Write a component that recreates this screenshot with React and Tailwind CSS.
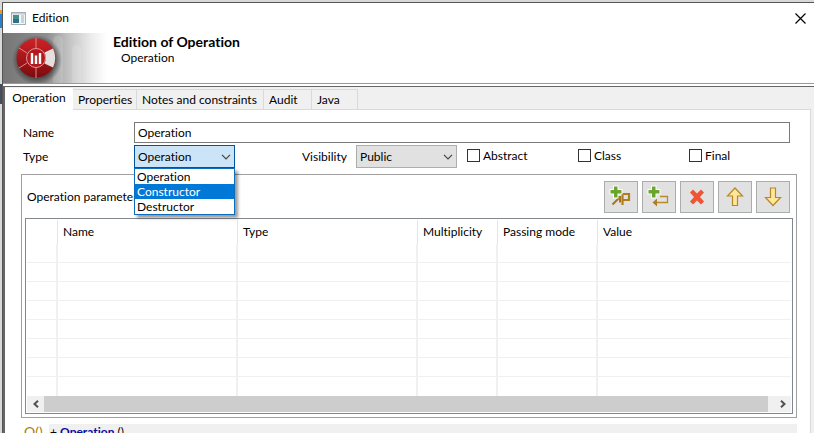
import React from "react";

const TABS = [
  { name: "Properties", width: "w-16" },
  { name: "Notes and constraints", width: "w-[127px]" },
  { name: "Audit", width: "w-12" },
  { name: "Java", width: "w-[46px]" },
];

const COLUMNS = [
  { name: "", width: "w-[31px]" },
  { name: "Name", width: "w-[180px]" },
  { name: "Type", width: "w-[180px]" },
  { name: "Multiplicity", width: "w-20" },
  { name: "Passing mode", width: "w-[100px]" },
  { name: "Value", width: "" },
];

function Chevron() {
  return (
    <svg viewBox="0 0 10 6" className="pointer-events-none absolute right-1 top-[9px] h-[6px] w-[10px]" fill="none" stroke="#444" strokeWidth="1.2">
      <path d="M1 .8 5 4.8 9 .8" />
    </svg>
  );
}

function Logo() {
  return (
    <svg viewBox="0 0 104 50" className="h-[50px] w-[104px]">
      <defs>
        <linearGradient id="fade">
          <stop offset="0" stopColor="#767676" />
          <stop offset=".42" stopColor="#8e8e8e" />
          <stop offset=".6" stopColor="#bcbcbc" />
          <stop offset=".85" stopColor="#ececec" />
          <stop offset="1" stopColor="#ffffff" />
        </linearGradient>
        <radialGradient id="shade">
          <stop offset=".7" stopColor="#333" stopOpacity=".75" />
          <stop offset="1" stopColor="#333" stopOpacity="0" />
        </radialGradient>
        <linearGradient id="red" x1="0" y1="0" x2="0" y2="1">
          <stop offset="0" stopColor="#cf2226" />
          <stop offset="1" stopColor="#7d0b0e" />
        </linearGradient>
      </defs>
      <rect width="104" height="50" fill="url(#fade)" />
      <path d="M50 50V8q0-5 5-5t5 5v42zM69 50V17q0-5 4-5t5 5v33z" fill="#fff" opacity=".14" />
      <circle cx="34" cy="27" r="25" fill="url(#shade)" />
      <circle cx="33" cy="25" r="19.5" fill="url(#red)" />
      <path d="M41.500 19.500 50 15.500Q54.500 25 50 34.500L41.500 30.500Q44 25 41.500 19.500Z" fill="#e4e0df" />
      <path d="M33 5v10M33 35v10M16 15l8 5M16 35l8-5" stroke="#dc8a8a" strokeWidth="1" />
      <circle cx="33" cy="25" r="9.5" fill="#b5181c" stroke="#e09a9a" strokeWidth="1" />
      <path d="M29 20v11M33 22.500v8.500M37 20v11" stroke="#fff" strokeWidth="2.400" />
    </svg>
  );
}

function Plus() {
  return (
    <path d="M4 .5h3.500V4h4v3.500h-4v4H4v-4H.5V4H4z" fill="#6aa52c" stroke="#fff" strokeWidth="2" paintOrder="stroke" />
  );
}

function AddParameterIcon() {
  return (
    <svg viewBox="0 0 22 22" className="h-[22px] w-[22px] overflow-visible" fill="none">
      <path d="M2.500 18.500 9 12M4.500 11h5.500v5.500" stroke="#a8761a" strokeWidth="2" />
      <path d="M12.500 19V8h6.500v6h-6.500" stroke="#b07d1c" strokeWidth="2.200" />
      <Plus />
    </svg>
  );
}

function AddReturnIcon() {
  return (
    <svg viewBox="0 0 22 22" className="h-[22px] w-[22px] overflow-visible" fill="none">
      <path d="M12 10.500h7.500v6H7" stroke="#b98a2c" strokeWidth="1.300" />
      <path d="M9 12.500v8l-4.500-4z" fill="#b07d1c" />
      <Plus />
    </svg>
  );
}

function DeleteIcon() {
  return (
    <svg viewBox="0 0 22 22" className="h-[22px] w-[22px]">
      <path d="m4 6.500 3-3 4 4 4-4 3 3-4 4.500 4 4.500-3 3-4-4-4 4-3-3L8 11z" fill="#ee5537" />
    </svg>
  );
}

function ArrowIcon({ down }) {
  return (
    <svg viewBox="0 0 22 22" className="h-[22px] w-[22px]">
      <path
        d={down ? "M8.500 2h5v9.500h5L11 19.500 3.500 11.500h5z" : "M8.500 19.500h5V10h5L11 2 3.500 10h5z"}
        fill="#ffe79a"
        stroke="#b8862a"
        strokeWidth="1.200"
      />
    </svg>
  );
}

function ToolButton({ label, children }) {
  return (
    <button type="button" aria-label={label} className="flex h-8 w-[34px] items-center justify-center border border-[#adadad] bg-[#e1e1e1]">
      {children}
    </button>
  );
}

function Check({ label }) {
  return (
    <label className="flex w-[111px] shrink-0 items-center gap-[3px] last:w-auto">
      <input type="checkbox" className="h-[13px] w-[13px] appearance-none border border-[#333] bg-white" />
      {label}
    </label>
  );
}

export default function App() {
  return (
    <div className="flex h-screen overflow-hidden bg-[#d9d9d9] pt-[2px] font-['Lato','Open_Sans',sans-serif] text-[12px] leading-4 text-black [font-variant-ligatures:none]">
      <div className="flex w-[2px] shrink-0 flex-col">
        <div className="mt-2 h-1 bg-[#e39a2d]" />
        <div className="h-[14px] bg-[#2b7fd0]" />
        <div className="mt-14 h-5 bg-[#454c5e]" />
      </div>
      <div className="flex min-w-0 grow flex-col border-l border-t border-[#555] bg-white">
        <header className="flex h-[30px] shrink-0 items-center justify-between pl-2 pr-[2px]">
          <div className="flex items-center gap-[6px]">
            <svg viewBox="0 0 15 13" className="h-[13px] w-[15px]">
              <rect x=".5" y=".5" width="14" height="12" fill="#f3f6f7" stroke="#a3b0b5" />
              <path d="M1 1h13v1.500H1z" fill="#c2ced3" />
              <path d="M2 3h6v8H2z" fill="#478d88" />
              <path d="M2 7h6v4H2z" fill="#336f88" />
              <path d="M10 3h3v8h-3z" fill="#c9d4d8" />
            </svg>
            <span>Edition</span>
          </div>
          <button type="button" aria-label="Close" className="flex h-6 w-6 items-center justify-center">
            <svg viewBox="0 0 11 11" className="h-[11px] w-[11px]" stroke="#000" strokeWidth="1.200">
              <path d="m.5.5 10 10M10.500.5l-10 10" />
            </svg>
          </button>
        </header>

        <div className="flex h-[51px] shrink-0 gap-[6px] border-b border-[#999]">
          <Logo />
          <div className="pt-[1px]">
            <h1 className="text-[14px] leading-4 font-bold">Edition of Operation</h1>
            <p className="pl-2">Operation</p>
          </div>
        </div>

        <div className="mt-[2px] flex min-h-0 grow flex-col border-l-2 border-t border-[#666] bg-[#f0f0f0] pr-[3px]">
          <div role="tablist" className="flex h-[22px] shrink-0 items-end">
            <button type="button" role="tab" aria-selected="true" className="relative z-10 -mb-px flex h-[22px] w-[68px] items-center justify-center bg-white pb-[2px]">
              Operation
            </button>
            {TABS.map((t) => (
              <button key={t.name} type="button" role="tab" className={`${t.width} h-5 border-r border-t border-[#d9d9d9] pl-[5px] text-left whitespace-nowrap`}>
                {t.name}
              </button>
            ))}
          </div>

          <main className="flex grow flex-col border-r border-t border-[#d9d9d9] bg-white pl-4 pr-[13px] pt-3">
            <div className="flex items-center pr-[7px]">
              <label htmlFor="name" className="w-[113px] shrink-0 pl-[2px]">Name</label>
              <input id="name" defaultValue="Operation" className="h-[21px] min-w-0 grow border border-[#7a7a7a] px-[3px]" />
            </div>

            <div className="mt-[2px] flex items-center">
              <label htmlFor="type" className="w-[113px] shrink-0 pl-[2px]">Type</label>
              <div className="relative w-[101px] shrink-0">
                <select id="type" className="block h-[23px] w-full appearance-none border border-[#00559b] bg-[#cce4f7] px-[3px]">
                  <option>Operation</option>
                  <option>Constructor</option>
                  <option>Destructor</option>
                </select>
                <Chevron />
                <ul className="absolute left-0 top-[23px] z-20 w-full border border-[#0f6cbd] bg-white leading-[15px] shadow-[3px_3px_3px_rgba(0,0,0,0.4)]">
                  <li className="px-[2px]">Operation</li>
                  <li className="bg-[#0078d7] px-[2px] text-white">Constructor</li>
                  <li className="px-[2px]">Destructor</li>
                </ul>
              </div>
              <label htmlFor="visibility" className="ml-[67px] w-[54px] shrink-0">Visibility</label>
              <div className="relative w-[101px] shrink-0">
                <select id="visibility" className="block h-[23px] w-full appearance-none border border-[#adadad] bg-[#e1e1e1] px-[3px]">
                  <option>Public</option>
                </select>
                <Chevron />
              </div>
              <div className="ml-[10px] flex pb-[2px]">
                <Check label="Abstract" />
                <Check label="Class" />
                <Check label="Final" />
              </div>
            </div>

            <section className="mt-[6px] flex flex-col border border-[#a0a0a0] p-[3px]">
              <div className="flex items-center justify-between pb-[5px] pl-[2px] pr-[3px] pt-[3px]">
                <span>Operation parameters</span>
                <div className="flex gap-1">
                  <ToolButton label="Add parameter"><AddParameterIcon /></ToolButton>
                  <ToolButton label="Add return"><AddReturnIcon /></ToolButton>
                  <ToolButton label="Delete"><DeleteIcon /></ToolButton>
                  <ToolButton label="Move up"><ArrowIcon /></ToolButton>
                  <ToolButton label="Move down"><ArrowIcon down /></ToolButton>
                </div>
              </div>
              <div className="border border-[#828790] p-px">
                <table className="w-full table-fixed border-separate border-spacing-0">
                  <thead>
                    <tr className="h-6">
                      {COLUMNS.map((c, i) => (
                        <th key={i} className={`${c.width} border-r border-[#e5e5e5] p-0 pl-[5px] text-left font-normal last:border-r-0`}>
                          {c.name}
                        </th>
                      ))}
                    </tr>
                  </thead>
                  <tbody>
                    {[0, 1, 2, 3, 4, 5, 6, 7].map((r) => (
                      <tr key={r} className="group h-[19px]">
                        {COLUMNS.map((c, i) => (
                          <td key={i} className="border-r-2 border-b border-[#f0f0f2] p-0 last:border-r-0 group-last:border-b-0" />
                        ))}
                      </tr>
                    ))}
                  </tbody>
                </table>
                <div className="flex h-4 bg-[#f0f0f0]">
                  <button type="button" aria-label="Scroll left" className="flex w-[17px] items-center justify-center">
                    <svg viewBox="0 0 6 8" className="h-2 w-[6px]" fill="none" stroke="#505050" strokeWidth="2"><path d="M5 .8 1.500 4 5 7.200" /></svg>
                  </button>
                  <div className="grow bg-[#cdcdcd]" />
                  <button type="button" aria-label="Scroll right" className="flex w-[23px] items-center justify-center pl-[6px]">
                    <svg viewBox="0 0 6 8" className="h-2 w-[6px]" fill="none" stroke="#505050" strokeWidth="2"><path d="M1 .8 4.500 4 1 7.200" /></svg>
                  </button>
                </div>
              </div>
            </section>

            <div className="mt-[6px] flex h-5 shrink-0">
              <span className="w-7 pl-[3px] text-[14px] text-[#a88008]">O()</span>
              <p className="grow bg-[#f0f0f0] pl-[1px]">
                + <b className="text-[#0a0a9a]">Operation</b> ()
              </p>
            </div>
          </main>
        </div>
      </div>
    </div>
  );
}
